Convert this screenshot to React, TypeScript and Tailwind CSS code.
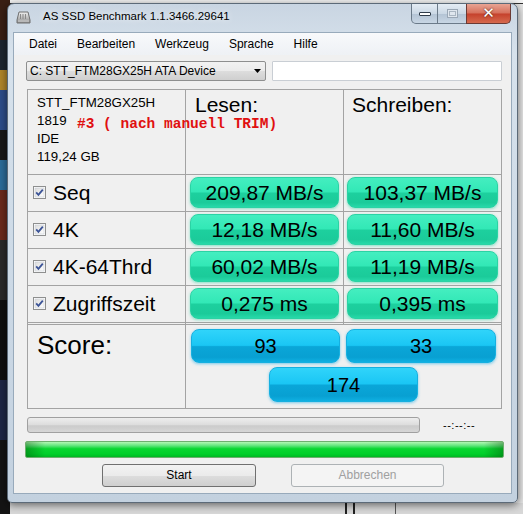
import React from 'react';

interface IResultRow {
  label: string;
  read: string;
  write: string;
}

const rows: IResultRow[] = [
  { label: 'Seq', read: '209,87 MB/s', write: '103,37 MB/s' },
  { label: '4K', read: '12,18 MB/s', write: '11,60 MB/s' },
  { label: '4K-64Thrd', read: '60,02 MB/s', write: '11,19 MB/s' },
  { label: 'Zugriffszeit', read: '0,275 ms', write: '0,395 ms' }
];

const menuItems = ['Datei', 'Bearbeiten', 'Werkzeug', 'Sprache', 'Hilfe'];

const CheckBox = () => (
  <svg width="13" height="13" viewBox="0 0 13 13" className="shrink-0">
    <defs>
      <linearGradient id="cbg" x1="0" y1="0" x2="1" y2="1">
        <stop offset="0" stopColor="#dcdcdc" />
        <stop offset="1" stopColor="#ffffff" />
      </linearGradient>
    </defs>
    <rect x="0.5" y="0.5" width="12" height="12" fill="#fff" stroke="#8e8f8f" />
    <rect x="2" y="2" width="9" height="9" fill="url(#cbg)" stroke="#c6cbd3" strokeWidth="0.6" />
    <path d="M3.2 6.4 L5.4 8.8 L9.8 3.6" fill="none" stroke="#3c5497" strokeWidth="1.8" />
  </svg>
);

const GreenBar = ({ value }: { value: string }) => (
  <div className="h-[31px] rounded-[8px] border border-[#2bd3a4] bg-[linear-gradient(to_bottom,#44eec0_0%,#32e8b6_48%,#1dd09e_52%,#1bcb9a_85%,#27d9a9_100%)] shadow-[0_1px_3px_rgba(60,215,170,0.6)] flex items-center justify-center text-[21px] text-black leading-none">
    {value}
  </div>
);

const BlueBar = ({ value, className }: { value: string; className: string }) => (
  <div
    className={`rounded-[8px] border border-[#16b0e0] bg-[linear-gradient(to_bottom,#30d4fa_0%,#1ac6f4_48%,#0aa6d8_52%,#08a0d2_85%,#0fb0e2_100%)] shadow-[0_1px_3px_rgba(20,170,230,0.55)] flex items-center justify-center text-[20px] text-black leading-none ${className}`}
  >
    {value}
  </div>
);

const TitleButtons = () => (
  <div className="flex h-[20px] mr-[6px]">
    <div className="w-[27px] h-full rounded-bl-[5px] border border-t-0 border-[#6b7a89] bg-[linear-gradient(to_bottom,#e4ecf4_0%,#cbd8e5_50%,#b3c3d4_51%,#c8d6e4_100%)] flex items-center justify-center">
      <div className="w-[12px] h-[4px] border border-[#2f3c4a] bg-white rounded-[1px]" />
    </div>
    <div className="w-[28px] h-full border-b border-[#6b7a89] bg-[linear-gradient(to_bottom,#e4ecf4_0%,#cbd8e5_50%,#b3c3d4_51%,#c8d6e4_100%)] flex items-center justify-center">
      <div className="w-[11px] h-[9px] border border-[#9aa7b5] bg-[#dfe6ee]">
        <div className="mx-[1px] mt-[1px] h-[5px] border border-[#aab6c2]" />
      </div>
    </div>
    <div className="w-[45px] h-full rounded-br-[5px] border border-t-0 border-[#6b3a34] bg-[linear-gradient(to_bottom,#e8a493_0%,#d6705c_48%,#c5412c_52%,#d66a4e_100%)] flex items-center justify-center">
      <span className="text-white font-bold text-[15px] leading-none [font-family:'DejaVu_Sans',sans-serif] [text-shadow:0_0_2px_#3a1a10]">
        ✕
      </span>
    </div>
  </div>
);

const AppIcon = () => (
  <svg width="15" height="13" viewBox="0 0 15 13">
    <defs>
      <linearGradient id="drv" x1="0" y1="0" x2="0" y2="1">
        <stop offset="0" stopColor="#f2f2f2" />
        <stop offset="1" stopColor="#8c8c8c" />
      </linearGradient>
    </defs>
    <path d="M3 1 H12 L14 9 V12 H1 V9 Z" fill="url(#drv)" stroke="#6e6e6e" />
    <rect x="2" y="9" width="11" height="2" fill="#b8b8b8" />
    <rect x="4" y="3" width="1" height="5" fill="#888" />
    <rect x="6.5" y="3" width="1" height="5" fill="#888" />
    <rect x="9" y="3" width="1" height="5" fill="#888" />
  </svg>
);

export default function App() {
  return (
    <div className="relative w-[523px] h-[514px] overflow-hidden bg-[#e6e6e6] [font-family:'Liberation_Sans',Arial,sans-serif]">
      {/* desktop behind the window */}
      <div className="flex h-full">
        <div className="w-[10px] h-full flex flex-col bg-[#141414]">
          <div className="h-[40px] bg-[#3a1f14]" />
          <div className="h-[30px] bg-[#1d2630]" />
          <div className="h-[20px] bg-[#b0862a]" />
          <div className="h-[40px] bg-[#2c4d8a]" />
          <div className="h-[30px] bg-[#181818]" />
          <div className="h-[30px] bg-[#2b6c9a]" />
          <div className="h-[50px] bg-[#6b2a1c]" />
          <div className="h-[60px] bg-[#2a2a2a]" />
          <div className="h-[80px] bg-[#0f0f0f]" />
          <div className="h-[60px] bg-[#1d2746]" />
        </div>
        <div className="flex-1 flex flex-col">
          <div className="h-[4px] bg-[#f4f4f4] border-b border-[#333]" />
          <div className="flex-1" />
          <div className="h-[11px] bg-[#d8d8d8] flex">
            <div className="ml-[335px] w-[2px] bg-[#222]" />
            <div className="ml-[6px] w-[2px] bg-[#222]" />
            <div className="ml-[40px] w-[1px] bg-[#555]" />
          </div>
        </div>
      </div>

      {/* window */}
      <div className="absolute left-[7px] top-[3px] w-[511px] h-[500px] flex flex-col rounded-t-[7px] rounded-b-[5px] border border-[#5c6a78] bg-[linear-gradient(to_bottom,#c9d5e2_0%,#d7e2ec_10%,#cbd8e5_60%,#c3d1df_100%)] shadow-[0_2px_8px_rgba(0,0,0,0.55)]">
        <div className="h-[28px] flex items-start justify-between">
          <div className="flex items-center h-[26px] pl-[8px] gap-[12px]">
            <AppIcon />
            <span className="text-[11.5px] text-black [text-shadow:0_0_6px_#ffffff]">
              AS SSD Benchmark 1.1.3466.29641
            </span>
          </div>
          <TitleButtons />
        </div>

        <div className="mx-[5px] flex-1 mb-[8px] border border-[#98aabb] bg-[#f0f0f0] flex flex-col">
          <div className="h-[22px] flex items-center pl-[15px] gap-[20px] text-[12px] text-black bg-[linear-gradient(to_bottom,#f8f9fb,#eef1f5)]">
            {menuItems.map((item) => (
              <span key={item}>{item}</span>
            ))}
          </div>

          <div className="pl-[12px] pr-[9px] flex flex-col">
            <div className="mt-[6px] flex gap-[6px] h-[20px]">
              <div className="w-[240px] h-full rounded-[2px] border border-[#8e8f8f] bg-[linear-gradient(to_bottom,#f2f2f2,#ebebeb_50%,#dddddd_51%,#cfcfcf)] flex items-center justify-between pl-[3px] pr-[4px] text-[12px] text-black">
                <span>C: STT_FTM28GX25H ATA Device</span>
                <svg width="7" height="4" viewBox="0 0 7 4">
                  <path d="M0 0 H7 L3.5 4 Z" fill="#000" />
                </svg>
              </div>
              <div className="flex-1 h-full border border-[#c9ced4] bg-white rounded-[1px]" />
            </div>

            {/* results table */}
            <div className="relative mt-[8px] ml-[1px] w-[475px] border-l border-t border-[#a3a3a3] text-black">
              <div className="grid grid-cols-[158px_158px_158px]">
                <div className="h-[85px] border-r border-b border-[#a3a3a3] pl-[9px] pt-[4px] text-[13.3px] leading-[18px]">
                  <div>STT_FTM28GX25H</div>
                  <div>1819</div>
                  <div>IDE</div>
                  <div>119,24 GB</div>
                </div>
                <div className="h-[85px] border-r border-b border-[#a3a3a3] pl-[9px] pt-[3px] text-[21px] leading-[24px]">
                  Lesen:
                </div>
                <div className="h-[85px] border-r border-b border-[#a3a3a3] pl-[8px] pt-[3px] text-[21px] leading-[24px]">
                  Schreiben:
                </div>

                {rows.map((row, i) => {
                  const rowBorder =
                    i === rows.length - 1
                      ? 'h-[39px] border-b-[3px] border-double'
                      : 'h-[37px] border-b';
                  return (
                    <React.Fragment key={row.label}>
                      <div
                        className={`${rowBorder} border-r border-[#a3a3a3] flex items-center pl-[5px] gap-[7px] pb-[1px]`}
                      >
                        <CheckBox />
                        <span className="text-[21px] leading-none">{row.label}</span>
                      </div>
                      <div className={`${rowBorder} border-r border-[#a3a3a3] px-[4px] pt-[2px]`}>
                        <GreenBar value={row.read} />
                      </div>
                      <div className={`${rowBorder} border-r border-[#a3a3a3] px-[3px] pt-[2px]`}>
                        <GreenBar value={row.write} />
                      </div>
                    </React.Fragment>
                  );
                })}
              </div>

              <div className="flex h-[84px] border-b border-[#a3a3a3]">
                <div className="w-[158px] border-r border-[#a3a3a3] pl-[9px] pt-[5px] text-[26px] leading-[30px]">
                  Score:
                </div>
                <div className="w-[316px] border-r border-[#a3a3a3] flex flex-col items-center pt-[4px] gap-[4px]">
                  <div className="flex gap-[6px]">
                    <BlueBar value="93" className="w-[149px] h-[34px]" />
                    <BlueBar value="33" className="w-[150px] h-[34px]" />
                  </div>
                  <BlueBar value="174" className="w-[149px] h-[35px]" />
                </div>
              </div>

              {/* annotation written over the screenshot */}
              <span className="absolute left-[49px] top-[27px] text-[14.5px] font-bold text-[#e01010] leading-none whitespace-pre [font-family:'Liberation_Mono','Courier_New',monospace]">
                #3 ( nach manuell TRIM)
              </span>
            </div>

            <div className="mt-[8px] flex items-center">
              <div className="ml-[1px] w-[393px] h-[16px] rounded-[3px] border border-[#a0a0a0] bg-[linear-gradient(to_bottom,#eeeeee,#dcdcdc_50%,#cbcbcb_55%,#d6d6d6)]" />
              <span className="ml-[23px] text-[11px] text-black tracking-[0.5px]">--:--:--</span>
            </div>

            <div className="mt-[7px] -ml-[1px] w-[479px] h-[17px] rounded-[2px] border border-[#6fae6f] bg-[linear-gradient(to_right,rgba(0,60,0,0.35),rgba(0,0,0,0)_4%,rgba(0,0,0,0)_96%,rgba(0,60,0,0.35)),linear-gradient(to_bottom,#b4f7b4_0%,#5fe57a_25%,#0ad631_45%,#00cf2a_80%,#00b824_100%)]" />

            <div className="mt-[6px] flex">
              <button className="ml-[76px] w-[154px] h-[23px] rounded-[3px] border border-[#707070] bg-[linear-gradient(to_bottom,#f2f2f2,#ebebeb_50%,#dddddd_51%,#cfcfcf)] text-[12px] text-black">
                Start
              </button>
              <button className="ml-[35px] w-[153px] h-[23px] rounded-[3px] border border-[#adb2b5] bg-[#f4f4f4] text-[12px] text-[#a0a0a0]">
                Abbrechen
              </button>
            </div>
          </div>
        </div>
      </div>
    </div>
  );
}
